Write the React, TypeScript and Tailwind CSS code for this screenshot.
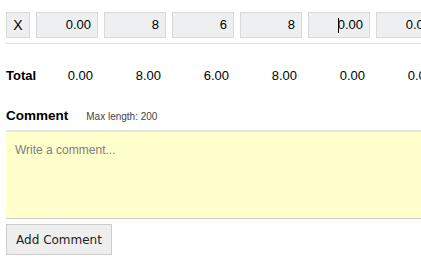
import React from "react";

const boxes = ["0.00", "8", "6", "8", "0.00", "0.00"];
const totals = ["0.00", "8.00", "6.00", "8.00", "0.00", "0.00"];

export default function App() {
  return (
    <div
      className="w-[421px] h-[261px] overflow-hidden bg-white text-[13px] text-black"
      style={{ fontFamily: '"Liberation Sans", Arial, sans-serif' }}
    >
      <div className="w-[520px] pl-[6px] pt-[12px]">
        {/* input row */}
        <div className="flex gap-[6px]">
          <div className="w-[24px] h-[26px] shrink-0 bg-[#eeeff0] border border-[#d9d9d9] flex items-center justify-center text-[14px]">
            X
          </div>
          {boxes.map((b, i) => (
            <div
              key={i}
              className="w-[62px] h-[26px] shrink-0 bg-[#eeeff0] border border-[#d9d9d9] flex items-center justify-end pr-[6px] text-[13px]"
            >
              {i === 4 && <span className="inline-block w-px h-[15px] bg-black mr-[-1px]" />}
              {b}
            </div>
          ))}
        </div>
        <div className="h-px bg-[#dddddd] mt-[5px]" />

        {/* totals row */}
        <div className="flex gap-[6px] mt-[24px] h-[16px] items-center">
          <div className="w-[24px] shrink-0 font-bold whitespace-nowrap">Total</div>
          {totals.map((t, i) => (
            <div key={i} className="w-[62px] shrink-0 text-right pr-[5px]">
              {t}
            </div>
          ))}
        </div>

        {/* comment header */}
        <div className="flex items-baseline mt-[22px] h-[16px]">
          <span className="font-bold text-[13.5px]">Comment</span>
          <span className="ml-[18px] text-[10px] text-[#444]">Max length: 200</span>
        </div>

        {/* textarea */}
        <div className="mt-[8px] h-[89px] bg-[#ffffcc] border-t-2 border-t-[#e3e3e3] border-b border-b-[#cccccc] pl-[9px] pt-[9px] text-[12px] text-[#808080]">
          Write a comment...
        </div>

        {/* button */}
        <div className="mt-[5px]">
          <button
            className="w-[106px] h-[31px] bg-[#eeeeee] border border-[#cccccc] text-[12px] text-[#222]"
            style={{ fontFamily: '"DejaVu Sans", sans-serif' }}
          >
            Add Comment
          </button>
        </div>
      </div>
    </div>
  );
}
